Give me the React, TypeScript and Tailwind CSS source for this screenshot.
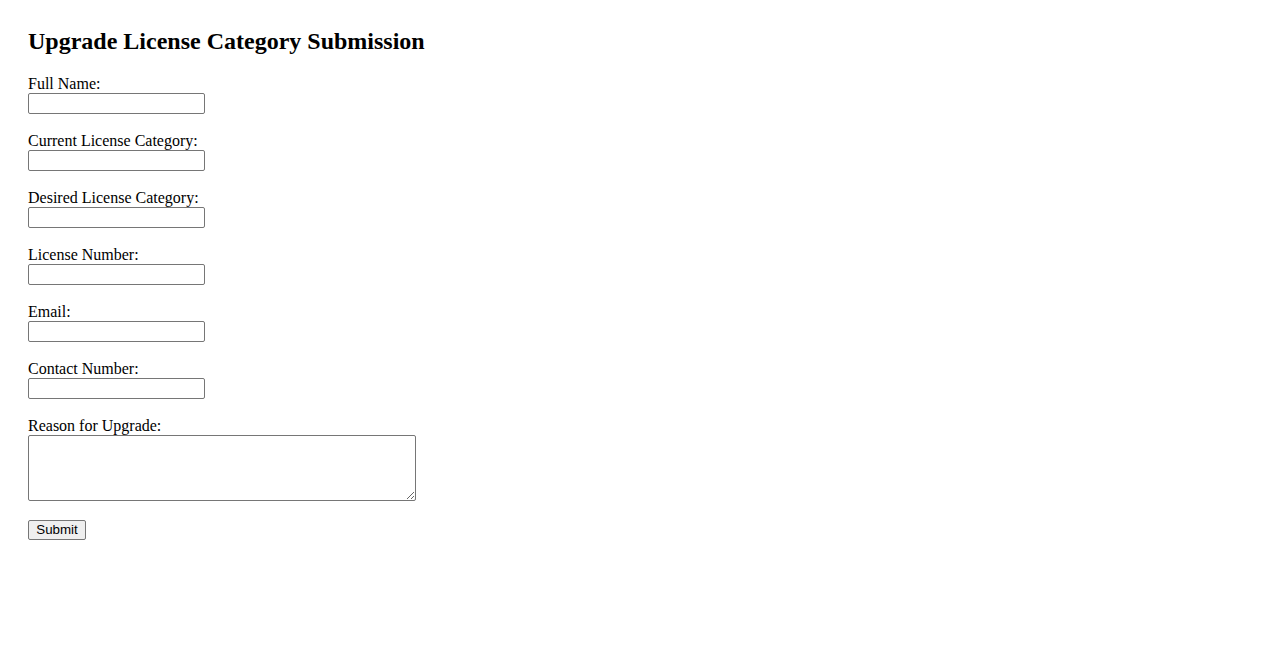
import React from "react";

const fields = [
  "Full Name:",
  "Current License Category:",
  "Desired License Category:",
  "License Number:",
  "Email:",
  "Contact Number:",
];

export default function App() {
  return (
    <div className="min-h-[650px] bg-white pl-[28px] pt-[27px] font-['Liberation_Serif',serif] text-black">
      <h2 className="m-0 text-[24px] font-bold leading-[28px]">
        Upgrade License Category Submission
      </h2>
      <form className="mt-[20px]" onSubmit={(e) => e.preventDefault()}>
        {fields.map((f) => (
          <div key={f} className="mb-[18px]">
            <label className="block text-[16px] leading-[18px]">{f}</label>
            <input
              type="text"
              className="block h-[21px] w-[177px] rounded-[2px] border border-[#767676] bg-white px-[2px] text-[13.33px] outline-none"
            />
          </div>
        ))}
        <div className="mb-[19px]">
          <label className="block text-[16px] leading-[18px]">Reason for Upgrade:</label>
          <textarea className="block h-[66px] w-[388px] rounded-[2px] border border-[#767676] bg-white p-[2px] text-[13.33px] outline-none" />
        </div>
        <button
          type="submit"
          className="block h-[20px] w-[58px] rounded-[2px] border border-[#767676] bg-[#efefef] p-0 font-['Liberation_Sans',Arial,sans-serif] text-[13.33px] leading-[18px] text-black"
        >
          Submit
        </button>
      </form>
    </div>
  );
}
